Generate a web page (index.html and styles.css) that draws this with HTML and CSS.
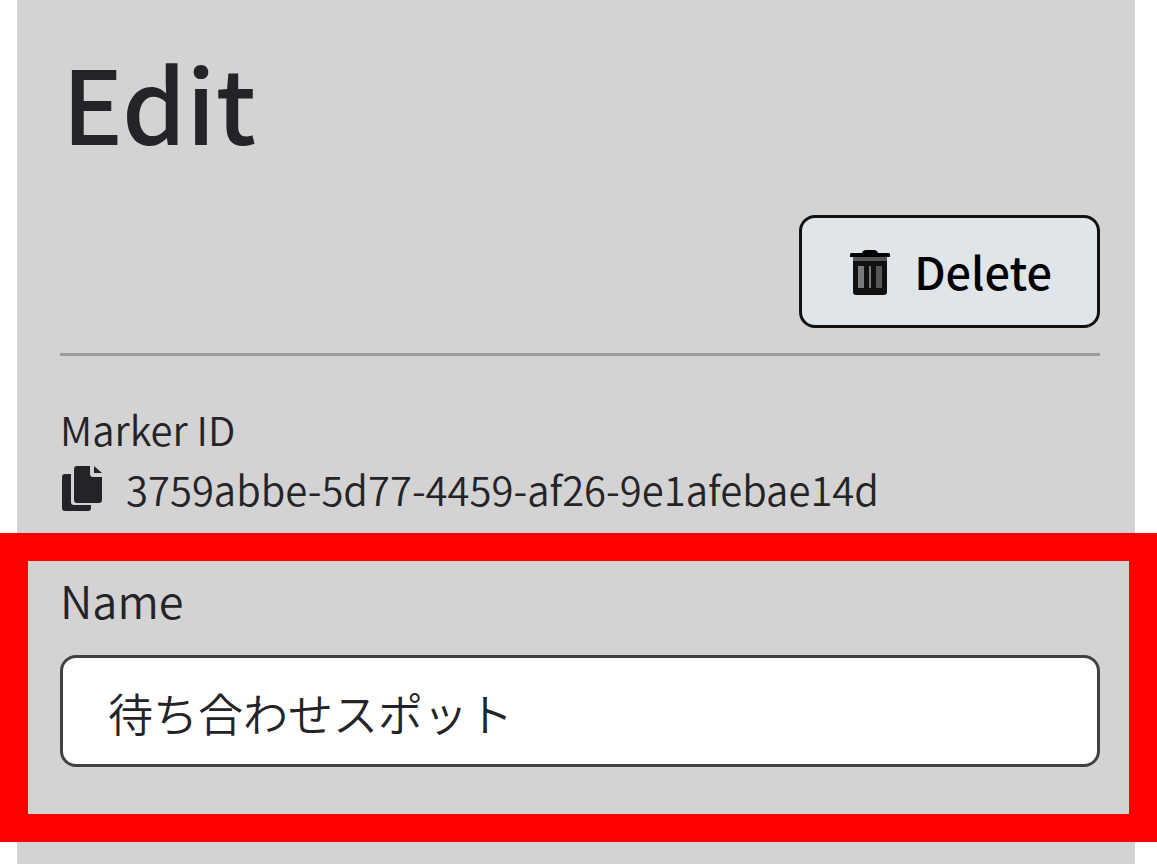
FILE: index.html
```html
<!DOCTYPE html>
<html lang="ja">
<head>
    <meta charset="UTF-8">
    <meta name="viewport" content="width=device-width, initial-scale=1.0">
    <title>Edit</title>
    <link rel="stylesheet" href="styles.css">
</head>
<body>
    <main class="panel">
        <h1 class="title">Edit</h1>

        <div class="toolbar">
            <button type="button" class="btn-delete">
                <svg class="icon-trash" viewBox="0 0 40 48" aria-hidden="true">
                    <path fill="#000" d="M12 6Q13 3 16 3H24Q27 3 28 6H39Q40 6 40 8V10H0V8Q0 6 1 6Z"/>
                    <path fill="#55585a" d="M3 10H37V15H3Z"/>
                    <path fill="#111" d="M3 14H37V45Q37 48 34 48H6Q3 48 3 45Z"/>
                    <path fill="#777b7d" d="M8 19H14V41H8ZM19 19H21V41H19Z"/>
                    <path fill="#55585a" d="M26 19H32V41H26Z"/>
                </svg>
                Delete
            </button>
        </div>

        <hr class="divider">

        <div class="marker">
            <div class="marker-label">Marker ID</div>
            <div class="marker-id">
                <button type="button" class="btn-copy" aria-label="Copy">
                    <svg class="icon-copy" viewBox="0 0 40 46" aria-hidden="true">
                        <path fill="#242428" d="M0 11Q0 8 3 8H9V36Q9 39 12 39H29V42Q29 45 26 45H3Q0 45 0 42Z"/>
                        <path fill="#242428" d="M12 3Q12 0 15 0H28V8Q28 11 31 11H40V34Q40 37 37 37H15Q12 37 12 34Z"/>
                        <path fill="#242428" d="M32 0L40 7H32Z"/>
                    </svg>
                </button>
                <span>3759abbe-5d77-4459-af26-9e1afebae14d</span>
            </div>
        </div>

        <div class="highlight">
            <label class="label" for="name">Name</label>
            <input class="text-input" type="text" id="name" value="待ち合わせスポット">
        </div>
    </main>
</body>
</html>
```
FILE: styles.css
```css
* {
    box-sizing: border-box;
}

body {
    margin: 0;
    background-color: #fff;
    color: #242428;
    font-family: "Noto Sans CJK JP", sans-serif;
    font-size: 45px;
    font-weight: 350;
    line-height: 60px;
}

.panel {
    min-height: 100vh;
    margin: 0 22px 0 17px;
    padding: 37px 35px 22px 43px;
    background-color: #d3d3d3;
}

.title {
    margin: 0 0 50px 0;
    padding-left: 2px;
    font-size: 102px;
    font-weight: 500;
    line-height: 128px;
}

.toolbar {
    display: flex;
    justify-content: flex-end;
}

.btn-delete {
    display: flex;
    align-items: center;
    gap: 24px;
    padding: 23px 45px 24px 48px;
    border: 3px solid #111;
    border-radius: 16px;
    background-color: #e0e5e9;
    color: #000;
    font-family: inherit;
    font-size: 45px;
    font-weight: 500;
    line-height: 60px;
    cursor: pointer;
}

.icon-trash {
    width: 40px;
    height: 48px;
}

.divider {
    height: 3px;
    margin: 25px 0 43px;
    border: none;
    background-color: #9b9b9b;
}

.marker {
    font-size: 40px;
}

.marker-id {
    display: flex;
    align-items: center;
    gap: 24px;
}

.btn-copy {
    display: flex;
    padding: 0 0 0 2px;
    border: none;
    background: none;
    cursor: pointer;
}

.icon-copy {
    width: 40px;
    height: 46px;
}

/* red frame runs past both edges of the panel */
.highlight {
    margin: 14px -57px 0 -60px;
    padding: 9px 29px 47px 32px;
    border: 28px solid #f00;
}

.label {
    display: block;
}

.text-input {
    display: block;
    width: 100%;
    margin-top: 25px;
    padding: 25px 45px 21px;
    border: 3px solid #414145;
    border-radius: 16px;
    background-color: #fff;
    color: #242428;
    font-family: inherit;
    font-size: 45px;
    font-weight: inherit;
    line-height: 60px;
}
```
